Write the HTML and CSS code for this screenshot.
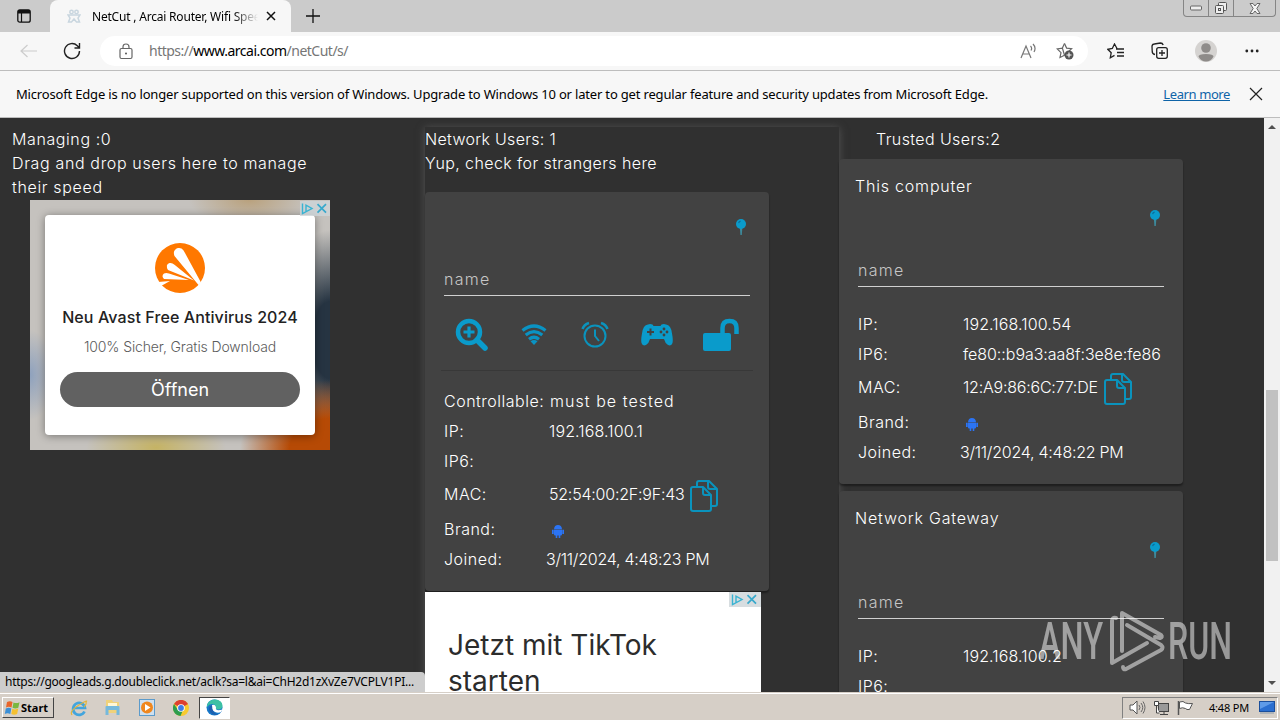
FILE: index.html
```
<!DOCTYPE html>
<html lang="en">
  <head>
    <meta charset="utf-8" />
    <meta name="viewport" content="width=device-width, initial-scale=1.0" />
    <title>NetCut , Arcai Router, Wifi Speed</title>
    <link rel="stylesheet" href="styles.css">
  </head>

  <body>
    <!-- shared icons -->
    <svg class="sprite" width="0" height="0">
      <symbol id="pin" viewBox="0 0 12 20">
        <path d="M4.8 9h2.600l-.6 8h-1.400z" fill="#3d8a9c" />
        <circle cx="6" cy="6" r="5" fill="#0a9bcb" />
        <path d="M3.6 5.200q.4-1.600 2-2" fill="none" stroke="#0b6f9c" stroke-width="1.200" />
      </symbol>
      <symbol id="copy" viewBox="0 0 28 32">
        <g fill="none" stroke="#0a93bd" stroke-width="2" stroke-linejoin="round">
          <path d="M7 6V3q0-2 2-2h10l8 8v15q0 2-2 2h-3" />
          <path d="M18 1v6q0 2 2 2h7" />
          <path d="M3 7h10l8 8v14q0 2-2 2H3q-2 0-2-2V9q0-2 2-2z" />
          <path d="M13 7v6q0 2 2 2h6" />
        </g>
      </symbol>
      <symbol id="android" viewBox="0 0 12 14">
        <path d="M2 5.200Q2.400 1 6 1t4 4.200zM2 5.700h8v4.800q0 1-1 1H8.300V14H6.700v-2.500H5.300V14H3.700v-2.500H3q-1 0-1-1zM0 5.700h1.700v4.300H0zM10.300 5.700H12v4.300h-1.700z" fill="#2b74f5" />
      </symbol>
      <symbol id="adchoices" viewBox="0 0 30 15">
        <path d="M2.500 2.500v10L12 7.500 6 4.200v6.300" fill="none" stroke="#38b3d2" stroke-width="1.400" />
        <path d="M17.500 3.200l8.500 8.500M26 3.200l-8.500 8.500" stroke="#38a9cc" stroke-width="1.700" />
      </symbol>
    </svg>

    <header class="tabbar">
      <svg class="tabActions" width="14" height="14" viewBox="0 0 14 14">
        <rect x=".8" y=".8" width="12.400" height="12.400" rx="2" fill="none" stroke="#111" stroke-width="1.300" />
        <path d="M1 1h12v3.500H1z" fill="#111" />
        <path d="M4.500 4v9" stroke="#111" stroke-width="1.200" />
      </svg>
      <div class="tab">
        <svg width="14" height="14" viewBox="0 0 14 14" fill="none" stroke="#c9d6df" stroke-width="1.500">
          <circle cx="4.500" cy="3" r="1.700" /><circle cx="9.500" cy="3" r="1.700" />
          <path d="M1 6h12l-2 3 1.500 4H9.500L7 10l-2.500 3h-3L3 9z" />
        </svg>
        <span class="tabTitle">NetCut , Arcai Router, Wifi Speed</span>
        <svg width="10" height="10" viewBox="0 0 10 10"><path d="M1 1l8 8M9 1L1 9" stroke="#111" stroke-width="1.500" /></svg>
      </div>
      <svg class="newTab" width="14" height="14" viewBox="0 0 14 14"><path d="M7 0v14M0 7h14" stroke="#111" stroke-width="1.300" /></svg>
      <div class="windowButtons">
        <span><svg width="12" height="6" viewBox="0 0 12 6"><rect x=".5" y="1" width="11" height="4" rx="1" fill="#eee" stroke="#666" /></svg></span>
        <span><svg width="14" height="13" viewBox="0 0 14 13" fill="#eee" stroke="#555"><rect x="4.500" y=".5" width="8" height="8" rx="1" /><rect x="1.500" y="3.500" width="8" height="8" rx="1" /><rect x="4.500" y="6.500" width="2" height="2" /></svg></span>
        <span class="wide"><svg width="12" height="11" viewBox="0 0 12 11"><path d="M1 .5h3l2 2.500L8 .5h3L7.800 5.500 11 10.500H8L6 8l-2 2.500H1l3.200-5z" fill="#f5f5f5" stroke="#666" /></svg></span>
      </div>
    </header>

    <nav class="toolbar">
      <svg class="back" width="17" height="14" viewBox="0 0 17 14"><path d="M17 7H1M7.500 1L1 7l6.500 6" fill="none" stroke="#ccc" stroke-width="1.200" /></svg>
      <svg class="reload" width="18" height="18" viewBox="0 0 18 18"><path d="M16.500 9A7.500 7.500 0 1 1 14.300 3.700L16.300 5.700M16.500 1v5h-5" fill="none" stroke="#222" stroke-width="1.400" /></svg>
      <div class="address">
        <svg width="14" height="17" viewBox="0 0 14 17"><rect x="1" y="5.500" width="12" height="10" rx="1.500" fill="none" stroke="#666" stroke-width="1.200" /><path d="M4 5.500V4q0-3 3-3t3 3v1.500" fill="none" stroke="#666" stroke-width="1.200" /><circle cx="7" cy="10.500" r="1" fill="#555" /></svg>
        <span class="url">https://<b>www.arcai.com</b>/netCut/s/</span>
        <svg class="readAloud" width="17" height="16" viewBox="0 0 17 16"><path d="M1 15L6 3l5 12M3 11h6.500M10.500 3q2 2 .5 4.500M13 1q3.500 3.500 1 8" fill="none" stroke="#777" stroke-width="1.200" /></svg>
        <svg width="18" height="18" viewBox="0 0 18 18"><path d="M8.500 1.500l2.100 4.600 5 .6-3.700 3.400M8.500 13.300L4 15.500l1-4.900L1.200 6.900l5.200-.8z" fill="none" stroke="#666" stroke-width="1.200" /><path d="M8.500 1.500L6.400 6.100" stroke="#666" stroke-width="1.200" /><circle cx="13" cy="13" r="4.500" fill="#555" /><path d="M13 10.500v5M10.500 13h5" stroke="#fff" stroke-width="1.100" /></svg>
      </div>
      <svg class="tool" width="18" height="16" viewBox="0 0 18 16"><path d="M10 5.500L7.500 1 5.300 5.500.8 6.300l3.400 3.400-.9 5 4.200-2.300M9 6h8M10 9.500h7M10 13h7" fill="none" stroke="#222" stroke-width="1.300" /></svg>
      <svg class="tool" width="18" height="18" viewBox="0 0 18 18"><path d="M4 12.500Q1 12 1.200 9L1 4.500Q1 2.300 3.300 2L9.500 1q2 0 2.700 2" fill="none" stroke="#222" stroke-width="1.300" /><rect x="5.700" y="5.700" width="10.600" height="10.600" rx="2" fill="#f7f7f7" stroke="#222" stroke-width="1.300" /><path d="M11 8v6M8 11h6" stroke="#222" stroke-width="1.300" /></svg>
      <svg class="avatar" width="22" height="22" viewBox="0 0 22 22"><circle cx="11" cy="11" r="11" fill="#d5d3d1" /><circle cx="11" cy="8" r="4.800" fill="#8e8b89" /><path d="M3.500 16.500q0-2.500 7.500-2.500t7.500 2.500q-2.500 5-7.500 5t-7.500-5z" fill="#8e8b89" /></svg>
      <svg width="14" height="4" viewBox="0 0 14 4" fill="#222"><circle cx="1.800" cy="2" r="1.400" /><circle cx="7" cy="2" r="1.400" /><circle cx="12.200" cy="2" r="1.400" /></svg>
    </nav>

    <aside class="infobar">
      <p>Microsoft Edge is no longer supported on this version of Windows. Upgrade to Windows 10 or later to get regular feature and security updates from Microsoft Edge.</p>
      <a href="#">Learn more</a>
      <svg width="14" height="14" viewBox="0 0 14 14"><path d="M1 1l12 12M13 1L1 13" stroke="#222" stroke-width="1.200" /></svg>
    </aside>

    <div class="viewport">
      <main>
        <section class="column managing">
          <p class="count">Managing :0</p>
          <p class="hint">Drag and drop users here to manage<br />their speed</p>

          <div class="avastAd">
            <svg class="choices" width="30" height="15"><use href="#adchoices" /></svg>
            <div class="avastBox">
              <svg width="50" height="50" viewBox="0 0 50 50">
                <circle cx="25" cy="25" r="25" fill="#ff7800" />
                <path d="M19.500 13C17 7 22.500 3.500 26.500 5.500q2 1 3.500 4.500L46 39.500l-2.500 2.500z" fill="#fff" />
                <path d="M13 27q-3-5.500 1.500-7 2.500-.6 5 1.700L39 37.500z" fill="#fff" />
                <path d="M9 36q-3-3 0-5.500 2-1 5 0L34 37z" fill="#fff" />
                <path d="M3 39l12-1-9 5z" fill="#fff" />
              </svg>
              <h2>Neu Avast Free Antivirus 2024</h2>
              <p>100% Sicher, Gratis Download</p>
              <button>Öffnen</button>
            </div>
          </div>
        </section>

        <section class="column network">
          <p class="count">Network Users: 1</p>
          <p class="hint">Yup, check for strangers here</p>

          <article class="card">
            <svg class="pin" width="12" height="20"><use href="#pin" /></svg>
            <div class="field">name</div>
            <div class="actions">
              <svg width="34" height="34" viewBox="0 0 34 34"><circle cx="14" cy="14" r="11" fill="none" stroke="#0a9bcb" stroke-width="4.500" /><path d="M22 22l8 8" stroke="#0a9bcb" stroke-width="5.500" stroke-linecap="round" /><path d="M14 8.500v11M8.500 14h11" stroke="#0a9bcb" stroke-width="3.200" /></svg>
              <svg class="wifi" width="26" height="22" viewBox="0 0 26 22"><path d="M1.500 6.500Q13-2.500 24.500 6.500M4.700 11q8.300-6.600 16.600 0M8 15.200q5-3.900 10 0" fill="none" stroke="#0a93c3" stroke-width="3.200" /><path d="M9.500 17.200q3.500-2.600 7 0L13 21z" fill="#0a93c3" /></svg>
              <svg class="clock" width="28" height="28" viewBox="0 0 28 28" fill="none" stroke="#0a93bd" stroke-width="2"><circle cx="14" cy="15" r="10.500" /><path d="M14 8.500V15l4 5" /><path d="M1.500 8Q3 3.500 8 2M26.500 8Q25 3.500 20 2" stroke-width="2.500" /></svg>
              <svg width="34" height="24" viewBox="0 0 34 24"><path d="M8 1.500q2-1 4.500 0l1 1.500h7l1-1.500q2.500-1 4.500 0 5 .5 6 9 1.300 7 .5 9.500-1 3.500-4.500 2-3-2-4-6H10q-1 4-4 6-3.500 1.500-4.500-2Q.7 17.500 2 10.500 3 2 8 1.500z" fill="#0a9bcb" /><path d="M10.500 5.500v7M7 9h7" stroke="#424242" stroke-width="2" /><g fill="#424242"><circle cx="24" cy="6" r="1.400" /><circle cx="24" cy="12" r="1.400" /><circle cx="21" cy="9" r="1.400" /><circle cx="27" cy="9" r="1.400" /></g></svg>
              <svg class="lock" width="38" height="34" viewBox="0 0 38 34"><rect x="1" y="15" width="28" height="18" rx="2" fill="#0a9bcb" /><path d="M20.500 15v-5q0-7 7-7t7 7v6" fill="none" stroke="#0a9bcb" stroke-width="4.500" /></svg>
            </div>
            <hr />
            <dl>
              <dt>Controllable:</dt><dd class="tested">must be tested</dd>
              <dt>IP:</dt><dd>192.168.100.1</dd>
              <dt>IP6:</dt><dd></dd>
              <dt class="mac">MAC:</dt><dd class="mac">52:54:00:2F:9F:43 <svg width="28" height="32"><use href="#copy" /></svg></dd>
              <dt>Brand:</dt><dd class="brand"><svg width="12" height="14"><use href="#android" /></svg></dd>
              <dt>Joined:</dt><dd class="joined">3/11/2024, 4:48:23 PM</dd>
            </dl>
          </article>

          <div class="tiktokAd">
            <svg class="choices" width="32" height="15"><use href="#adchoices" /></svg>
            <h2>Jetzt mit TikTok<br />starten</h2>
          </div>
        </section>

        <section class="column trusted">
          <p class="count">Trusted Users:2</p>

          <article class="card">
            <h3>This computer</h3>
            <svg class="pin" width="12" height="20"><use href="#pin" /></svg>
            <div class="field">name</div>
            <dl>
              <dt>IP:</dt><dd>192.168.100.54</dd>
              <dt>IP6:</dt><dd class="ip6">fe80::b9a3:aa8f:3e8e:fe86</dd>
              <dt class="mac">MAC:</dt><dd class="mac">12:A9:86:6C:77:DE <svg width="28" height="32"><use href="#copy" /></svg></dd>
              <dt>Brand:</dt><dd class="brand"><svg width="12" height="14"><use href="#android" /></svg></dd>
              <dt>Joined:</dt><dd class="joined">3/11/2024, 4:48:22 PM</dd>
            </dl>
          </article>

          <article class="card">
            <h3>Network Gateway</h3>
            <svg class="pin" width="12" height="20"><use href="#pin" /></svg>
            <div class="field">name</div>
            <dl>
              <dt>IP:</dt><dd>192.168.100.2</dd>
              <dt>IP6:</dt><dd></dd>
            </dl>
          </article>
        </section>
      </main>

      <div class="scrollbar">
        <svg width="8" height="4" viewBox="0 0 8 4"><path d="M0 4l4-4 4 4z" fill="#505050" /></svg>
        <div class="thumb"></div>
        <svg width="8" height="4" viewBox="0 0 8 4"><path d="M0 0l4 4 4-4z" fill="#505050" /></svg>
      </div>

      <div class="status">https://googleads.g.doubleclick.net/aclk?sa=l&amp;ai=ChH2d1zXvZe7VCPLV1PI...</div>

      <svg class="watermark" width="194" height="64" viewBox="0 0 194 64">
        <g fill="#fff" font-family="Roboto, sans-serif" font-size="52" font-weight="500">
          <text x="1" y="50" textLength="64" lengthAdjust="spacingAndGlyphs">ANY</text>
          <text x="130" y="50" textLength="64" lengthAdjust="spacingAndGlyphs">RUN</text>
        </g>
        <g fill="none" stroke="#fff" stroke-width="4" stroke-linejoin="round" stroke-linecap="round">
          <path d="M84 42V4l39 22q2 2-1 3l-5-1M89 16l34 20q3 3 0 5L88 60q-3 1-3-2" />
          <path d="M78 9q-4-1-4 3v42l35-20" />
        </g>
      </svg>
    </div>

    <footer class="taskbar">
      <button class="start">
        <svg width="17" height="16" viewBox="0 0 17 16"><path d="M3 2q3-1.500 5.500 0L7.500 7.500Q4.500 6 2 7.500z" fill="#e8652b" /><path d="M9.500 2.500q3 1.300 6-.3L14.300 7.700q-3 1.400-5.800 0z" fill="#7ab740" /><path d="M1.800 8.500q3-1.500 5.500 0l-1 5.500Q3.500 12.500.8 14z" fill="#3b8fd6" /><path d="M8.300 8.800q3 1.300 6-.2l-1.200 5.300q-3 1.500-5.800 0z" fill="#f5c02f" /></svg>
        Start
      </button>
      <span class="launcher"><svg width="18" height="18" viewBox="0 0 18 18"><path d="M14.500 12.500A6 6 0 1 1 15 9H4.500" fill="none" stroke="#43a5dd" stroke-width="2.700" /><path d="M2 16Q-1 12 9 6t7-3q1 2-2 5" fill="none" stroke="#e2b53b" stroke-width="1.200" /></svg></span>
      <span class="launcher"><svg width="18" height="17" viewBox="0 0 18 17"><path d="M2 1h6l1 2h6v11H2z" fill="#f0d27a" /><path d="M4 4h9v4H4z" fill="#fff7d6" /><path d="M1.500 16V8q0-1 1-1h12q1 0 1 1v8h-3v-5h-8v5z" fill="#76b9dc" /></svg></span>
      <span class="launcher"><svg width="16" height="17" viewBox="0 0 16 17"><rect x=".5" y=".5" width="15" height="16" fill="#cfe0ef" stroke="#5c9bcb" /><circle cx="8" cy="8.500" r="6" fill="#f0871e" /><path d="M6 5l5.500 3.500L6 12z" fill="#fff" /></svg></span>
      <span class="launcher"><svg width="16" height="16" viewBox="0 0 16 16"><circle cx="8" cy="8" r="8" fill="#f7ca2f" /><path d="M8 8L1 4A8 8 0 0 1 15 4z" fill="#dd3f31" /><path d="M1 4a8 8 0 0 0 6.500 12L10 10H5z" fill="#2d9d4f" /><circle cx="8" cy="8" r="3.800" fill="#fff" /><circle cx="8" cy="8" r="2.900" fill="#3f7de8" /></svg></span>
      <span class="launcher active"><svg width="17" height="17" viewBox="0 0 17 17"><circle cx="8.500" cy="8.500" r="8" fill="#1678c9" /><path d="M1 6Q3 .5 9 .5q7 .5 7.500 6 0 4-4 4-3 0-2.500-2Q9.500 5 6 5q-3 0-5 3z" fill="#3cc0a4" /><path d="M10 8Q9 5 6 6q-2 4 3 7 3 1.500 6 0l1.500-2.500Q9 13 10 8z" fill="#fff" /><path d="M6 6Q1 8 4 13q3 4 8 2.500-6-1-6-9.500z" fill="#1d5fae" /></svg></span>
      <div class="tray">
        <svg width="17" height="15" viewBox="0 0 17 15"><path d="M1 5h3l4-4v13l-4-4H1z" fill="#fff" stroke="#555" /><path d="M10 5q2 2.500 0 5M12 3q3.500 4.500 0 9M14 1.500q4 6 0 12" fill="none" stroke="#666" /></svg>
        <svg width="17" height="16" viewBox="0 0 17 16"><rect x="5.500" y="3.500" width="10" height="8" fill="#999" stroke="#444" /><path d="M7 14.500h8M11 12v2" stroke="#444" /><path d="M1.500 1.500h4v4h-4zM3.500 6v7h3" fill="#fff" stroke="#444" /></svg>
        <svg width="17" height="16" viewBox="0 0 17 16"><path d="M1.500 1v14" stroke="#555" stroke-width="1.500" /><path d="M2.500 2q4-1.500 6 1 3 1 7 .5l-3 6q-3 .5-4-1-3-1.500-6 0z" fill="#fff" stroke="#555" /></svg>
        <time>4:48 PM</time>
        <svg class="desktop" width="16" height="13" viewBox="0 0 16 13"><rect x=".5" y=".5" width="15" height="10" fill="#2b6fd0" stroke="#1b4f9c" /><path d="M1 1h14L1 8z" fill="#5f9be8" /><path d="M1 12h14" stroke="#89a" /></svg>
      </div>
    </footer>
  </body>
</html>
```

FILE: styles.css
```
* {
  box-sizing: border-box;
}

html,
body {
  height: 100%;
  width: 100%;
}

body {
  margin: 0;
  display: flex;
  flex-direction: column;
  overflow: hidden;
  font-family: 'Noto Sans', sans-serif;
  font-size: 13px;
  color: #000;
}

p,
h2,
h3,
dl,
dd {
  margin: 0;
  font-weight: 400;
}

svg {
  display: block;
  flex: none;
}

.sprite {
  position: absolute;
}

/* browser chrome */
.tabbar {
  display: flex;
  align-items: center;
  height: 32px;
  background: #cbcbcb;
}

.tabActions {
  margin: 0 19px 0 17px;
}

.tab {
  display: flex;
  align-items: center;
  width: 241px;
  height: 32px;
  padding: 0 15px 0 17px;
  border-radius: 8px 8px 0 0;
  background: #f7f7f7;
}

.tabTitle {
  width: 167px;
  margin: 0 8px 0 11px;
  overflow: hidden;
  white-space: nowrap;
  font-size: 12px;
  letter-spacing: -0.2px;
  -webkit-mask-image: linear-gradient(90deg, #000 85%, transparent);
}

.newTab {
  margin-left: 15px;
}

.windowButtons {
  display: flex;
  align-self: flex-start;
  width: 93px;
  height: 17px;
  margin: 0 4px 0 auto;
  border: 1px solid #858585;
  border-top: 0;
  border-radius: 0 0 4px 4px;
}

.windowButtons span {
  display: flex;
  align-items: center;
  justify-content: center;
  width: 25px;
  border-right: 1px solid #858585;
}

.windowButtons .wide {
  flex: 1;
  border: 0;
}

.toolbar {
  display: flex;
  align-items: center;
  height: 39px;
  padding: 0 21px 0 20px;
  background: #f7f7f7;
  border-bottom: 1px solid #bdbdbd;
}

.reload {
  margin: 0 19px 0 26px;
}

.address {
  display: flex;
  align-items: center;
  width: 988px;
  height: 30px;
  padding: 0 14px 0 19px;
  border-radius: 15px;
  background: #fff;
}

.url {
  margin: 0 auto 1px 16px;
  color: #767676;
  font-size: 14px;
  letter-spacing: -0.5px;
}

.url b {
  color: #000;
  font-weight: 400;
}

.readAloud {
  margin-right: 19px;
}

.tool {
  margin-left: 26px;
}

.address + .tool {
  margin-left: 19px;
}

.avatar {
  margin: 0 auto 0 26px;
}

.infobar {
  display: flex;
  align-items: center;
  height: 47px;
  padding: 0 17px 0 16px;
  background: #f7f7f7;
  border-bottom: 1px solid #bdbdbd;
}

.infobar p {
  margin-bottom: 1px;
  white-space: nowrap;
  letter-spacing: -0.175px;
}

.infobar a {
  margin: 0 19px 1px auto;
  color: #0f64a8;
  letter-spacing: -0.4px;
}

/* page */
.viewport {
  position: relative;
  display: flex;
  height: 574px;
  overflow: hidden;
}

main {
  display: flex;
  width: 1264px;
  padding-top: 9px;
  background: #303030;
  color: #fff;
  font-family: 'Inter', sans-serif;
  font-size: 16px;
  font-weight: 300;
  line-height: 24px;
}

main p,
h3,
dt,
dd,
.field {
  font-weight: 300;
  white-space: nowrap;
}

.column {
  width: 414px;
  height: 700px;
}

.count {
  letter-spacing: 0.3px;
}

.managing {
  width: 425px;
  padding-left: 12px;
}

.managing .count {
  letter-spacing: 0.6px;
}

.managing .hint {
  margin-bottom: 1px;
  letter-spacing: 0.65px;
}

.network {
  box-shadow: 0 1px 8px #555;
}

.network .hint {
  margin-bottom: 17px;
  letter-spacing: 0.4px;
}

.trusted {
  width: 425px;
}

.trusted .count {
  margin: 0 0 8px 37px;
  letter-spacing: 0.4px;
}

.card {
  width: 344px;
  padding: 16px 19px;
  border-radius: 4px;
  background: #424242;
  box-shadow: 0 2px 2px rgba(0, 0, 0, 0.4);
}

.trusted .card {
  position: relative;
  margin-bottom: 7px;
}

h3 {
  height: 24px;
  margin-left: -3px;
  font-size: 16px;
  line-height: 22px;
  letter-spacing: 0.8px;
}

.pin {
  margin: 10px 3.5px 0 auto;
}

.field {
  height: 28px;
  margin-top: 30px;
  border-bottom: 1px solid #d0d0d0;
  color: #c6c6c6;
  line-height: 22px;
  letter-spacing: 1.3px;
}

.actions {
  display: flex;
  align-items: center;
  gap: 31px;
  height: 74px;
  padding: 4px 0 0 11px;
}

.wifi {
  margin-left: 1px;
}

.clock {
  margin-left: 3px;
}

.lock {
  margin-left: -3px;
}

hr {
  height: 1px;
  margin: 0 -3px 16px;
  border: 0;
  background: #383838;
}

dl {
  display: grid;
  grid-template-columns: 105px 1fr;
  line-height: 28px;
}

.trusted dl {
  margin-top: 23px;
}

dt {
  letter-spacing: 0.5px;
}

dd {
  height: 30px;
  letter-spacing: 0.12px;
}

.ip6 {
  letter-spacing: -0.05px;
}

.tested {
  padding-left: 1px;
  letter-spacing: 1.05px;
}

.mac {
  display: flex;
  height: 38px;
  line-height: 34px;
}

dd.mac {
  letter-spacing: -0.22px;
}

.mac svg {
  margin: 3px 0 0 6px;
}

.network .mac svg {
  margin-left: 5px;
}

.brand {
  padding: 9px 0 0 3px;
}

.joined {
  margin-left: -3px;
  letter-spacing: -0.25px;
}

.choices {
  position: absolute;
  top: 0;
  right: 0;
  background: rgba(205, 212, 216, 0.8);
}

.avastAd {
  position: relative;
  width: 300px;
  height: 250px;
  margin-left: 18px;
  padding: 15px;
  background:
    radial-gradient(ellipse 90px 70px at 100% 100%, #b64a05 45%, transparent),
    radial-gradient(ellipse 50px 110px at 100% 56%, #263442 35%, transparent),
    radial-gradient(ellipse 70px 30px at 42% 99%, #c5b364, transparent),
    radial-gradient(ellipse 25px 45px at 0 70%, #8ea1bd, transparent),
    radial-gradient(ellipse 60px 25px at 73% 0, #b9a17d, transparent),
    #c5c2be;
}

.avastAd .choices {
  top: 1px;
}

.avastBox {
  display: flex;
  flex-direction: column;
  align-items: center;
  height: 220px;
  padding: 28px 15px;
  border-radius: 4px;
  background: #fff;
  box-shadow: 0 1px 8px rgba(0, 0, 0, 0.4);
}

.avastBox h2 {
  margin-top: 12px;
  color: #222;
  font-size: 16px;
  font-weight: 500;
  letter-spacing: 0.1px;
  white-space: nowrap;
}

.avastBox p {
  margin: 6px 0 13px;
  color: #5c5c5c;
  font-size: 14px;
  letter-spacing: -0.12px;
}

.avastBox button {
  width: 240px;
  height: 35px;
  border: 0;
  border-radius: 18px;
  background: #616161;
  color: #fff;
  font: 400 18px 'Inter', sans-serif;
}

.tiktokAd {
  position: relative;
  width: 336px;
  height: 280px;
  margin-top: 1px;
  padding: 35px 23px;
  background: #fff;
}

.tiktokAd h2 {
  color: #2c2c2c;
  font-size: 28px;
  font-weight: 400;
  line-height: 36px;
}

.scrollbar {
  display: flex;
  flex-direction: column;
  align-items: center;
  width: 16px;
  padding: 7px 0;
  background: #f1f1f1;
}

.thumb {
  width: 12px;
  height: 171px;
  margin: 261px 0 auto;
  background: #c1c1c1;
}

.status {
  position: absolute;
  left: 0;
  bottom: 0;
  width: 425px;
  height: 20px;
  padding-left: 5px;
  border-top-right-radius: 4px;
  background: #cdcdcd;
  font-size: 12px;
  line-height: 19px;
  letter-spacing: -0.24px;
  white-space: nowrap;
}

.watermark {
  position: absolute;
  left: 1038px;
  top: 491px;
  opacity: 0.5;
}

/* windows taskbar */
.taskbar {
  display: flex;
  align-items: center;
  height: 28px;
  padding: 2px 2px 0;
  border-top: 1px solid #d6cfc7;
  box-shadow: inset 0 1px #fff;
  background: #d6cfc7;
}

.start {
  display: flex;
  align-items: center;
  width: 52px;
  height: 21px;
  margin-right: 8px;
  padding: 0 1px;
  border: 1px solid;
  border-color: #fff #444 #444 #fff;
  background: #d6cfc7;
  font: 700 11px 'Noto Sans', sans-serif;
}

.launcher {
  display: flex;
  align-items: center;
  justify-content: center;
  width: 34px;
  height: 22px;
}

.launcher.active {
  width: 31px;
  margin-left: 1px;
  border: 1px solid;
  border-color: #444 #fff #fff #444;
  background: #fff;
}

.tray {
  display: flex;
  align-items: center;
  width: 156px;
  height: 22px;
  margin-left: auto;
  padding-left: 6px;
  gap: 7px;
  border: 1px solid;
  border-color: #808080 #fff #fff #808080;
  font-size: 11px;
}

time {
  margin-left: 8px;
  white-space: nowrap;
  letter-spacing: -0.2px;
}

.desktop {
  margin-left: 3px;
}
```
